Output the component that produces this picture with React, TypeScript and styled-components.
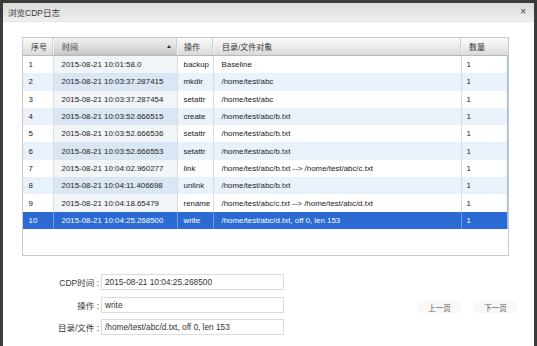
import styled, { createGlobalStyle } from 'styled-components';

const GlobalStyle = createGlobalStyle`
  html, body {
    margin: 0;
    padding: 0;
    width: 537px;
    height: 346px;
    overflow: hidden;
    background: #3b3b3b;
  }
  * {
    box-sizing: border-box;
  }
`;

const FONT = `'Liberation Sans', 'Noto Sans CJK SC', sans-serif`;

interface Column {
  title: string;
  width: string;
  pad: number;
  headPad: number;
}

const COLUMNS: Column[] = [
  { title: '序号', width: '31px', pad: 6, headPad: 8 },
  { title: '时间', width: '124px', pad: 8, headPad: 8 },
  { title: '操作', width: '36px', pad: 6, headPad: 6 },
  { title: '目录/文件对象', width: '248px', pad: 8, headPad: 8 },
  { title: '数量', width: '1fr', pad: 5, headPad: 7 },
];

const GRID_COLUMNS = COLUMNS.map((c) => c.width).join(' ');

const ROWS = [
  ['1', '2015-08-21 10:01:58.0', 'backup', 'Baseline', '1'],
  ['2', '2015-08-21 10:03:37.287415', 'mkdir', '/home/test/abc', '1'],
  ['3', '2015-08-21 10:03:37.287454', 'setattr', '/home/test/abc', '1'],
  ['4', '2015-08-21 10:03:52.666515', 'create', '/home/test/abc/b.txt', '1'],
  ['5', '2015-08-21 10:03:52.666536', 'setattr', '/home/test/abc/b.txt', '1'],
  ['6', '2015-08-21 10:03:52.666553', 'setattr', '/home/test/abc/b.txt', '1'],
  ['7', '2015-08-21 10:04:02.960277', 'link', '/home/test/abc/b.txt --> /home/test/abc/c.txt', '1'],
  ['8', '2015-08-21 10:04:11.406698', 'unlink', '/home/test/abc/b.txt', '1'],
  ['9', '2015-08-21 10:04:18.65479', 'rename', '/home/test/abc/c.txt --> /home/test/abc/d.txt', '1'],
  ['10', '2015-08-21 10:04:25.268500', 'write', '/home/test/abc/d.txt, off 0, len 153', '1'],
];

const SELECTED = 9;

const FIELDS = [
  { label: 'CDP时间 :', value: '2015-08-21 10:04:25.268500' },
  { label: '操作 :', value: 'write' },
  { label: '目录/文件 :', value: '/home/test/abc/d.txt, off 0, len 153' },
];

export default function App() {
  return (
    <>
      <GlobalStyle />
      <StyledFrame>
        <StyledDialog>
          <StyledTitleBar>
            <StyledTitle>浏览CDP日志</StyledTitle>
            <StyledClose>×</StyledClose>
          </StyledTitleBar>

          <StyledBody>
            <StyledGridBox>
              <StyledHeader>
                {COLUMNS.map((col, i) => (
                  <StyledHeadCell key={col.title} $pad={col.headPad} $sorted={i === 1}>
                    {col.title}
                    {i === 1 && <StyledSortArrow />}
                  </StyledHeadCell>
                ))}
              </StyledHeader>
              <StyledRows>
                {ROWS.map((row, r) => (
                  <StyledRow key={row[0]} $even={r % 2 === 1} $selected={r === SELECTED}>
                    {row.map((cell, c) => (
                      <StyledCell key={c} $pad={COLUMNS[c].pad} $sorted={c === 1}>
                        {cell}
                      </StyledCell>
                    ))}
                  </StyledRow>
                ))}
              </StyledRows>
            </StyledGridBox>

            <StyledFooter>
              <StyledFields>
                {FIELDS.map((f) => (
                  <StyledFieldRow key={f.label}>
                    <StyledLabel>{f.label}</StyledLabel>
                    <StyledInput>{f.value}</StyledInput>
                  </StyledFieldRow>
                ))}
              </StyledFields>
              <StyledPager>
                <StyledPageButton type="button">上一页</StyledPageButton>
                <StyledPageButton type="button">下一页</StyledPageButton>
              </StyledPager>
            </StyledFooter>
          </StyledBody>
        </StyledDialog>
      </StyledFrame>
    </>
  );
}

const StyledFrame = styled.div`
  display: flex;
  width: 537px;
  height: 346px;
  padding: 3px 3px 0 3px;

  background: #3b3b3b;
`;

const StyledDialog = styled.div`
  display: flex;
  flex-direction: column;
  flex: 1;

  background: #fff;
  font-family: ${FONT};
`;

const StyledTitleBar = styled.div`
  display: flex;
  align-items: center;
  justify-content: space-between;

  height: 19px;
  padding: 0 8px 0 5px;

  background: linear-gradient(#d9dcd9, #e4e7e4 60%, #eef0ee);
  border-bottom: 1px solid #e4e6e4;
`;

const StyledTitle = styled.span`
  color: #3a3a3a;
  font-size: 8.5px;
`;

const StyledClose = styled.span`
  color: #444;
  font-size: 10px;
  line-height: 1;
`;

const StyledBody = styled.div`
  display: flex;
  flex-direction: column;

  padding: 15px 25px 0 19px;
`;

const StyledGridBox = styled.div`
  display: flex;
  flex-direction: column;

  height: 219px;

  border: 1px solid #c9c9c9;
  background: #fff;
`;

const StyledHeader = styled.div`
  display: grid;
  grid-template-columns: ${GRID_COLUMNS};

  height: 18px;

  background: linear-gradient(#fafafa, #ececec 50%, #d9d9d9);
  border-bottom: 1px solid #b9b9b9;
`;

const StyledHeadCell = styled.div<{ $pad: number; $sorted: boolean }>`
  display: flex;
  align-items: center;
  justify-content: space-between;

  padding: 0 6px 0 ${({ $pad }) => $pad}px;

  color: #333;
  font-size: 8px;

  border-right: 1px solid #f4f4f4;
  box-shadow: inset -1px 0 0 #cfcfcf;
  background: ${({ $sorted }) => ($sorted ? 'linear-gradient(#f0f0f0, #dadada 60%, #c6c6c6)' : 'transparent')};

  &:last-child {
    border-right: none;
    box-shadow: none;
  }
`;

const StyledSortArrow = styled.span`
  width: 0;
  height: 0;

  border-left: 2.5px solid transparent;
  border-right: 2.5px solid transparent;
  border-bottom: 3px solid #333;
`;

const StyledRows = styled.div`
  display: flex;
  flex-direction: column;

  border-left: 1.5px solid #8fc2ec;
  border-right: 1.5px solid #8fc2ec;
`;

const StyledRow = styled.div<{ $even: boolean; $selected: boolean }>`
  display: grid;
  grid-template-columns: ${GRID_COLUMNS};

  height: 17.3px;
  margin-left: -1.5px;

  color: ${({ $selected }) => ($selected ? '#fff' : '#222')};
  background: ${({ $even, $selected }) => ($selected ? '#2a6ad2' : $even ? '#e9f2fb' : '#fff')};

  --sep: ${({ $selected }) => ($selected ? '#6e9be0' : '#d9dee4')};
  --sorted: ${({ $even, $selected }) =>
    $selected ? 'transparent' : $even ? 'rgba(150, 180, 210, 0.18)' : 'rgba(170, 190, 210, 0.16)'};
`;

const StyledCell = styled.div<{ $pad: number; $sorted: boolean }>`
  display: flex;
  align-items: center;

  padding-left: ${({ $pad }) => $pad}px;
  overflow: hidden;

  font-size: 7.9px;
  white-space: nowrap;

  border-right: 1px solid var(--sep);
  background: ${({ $sorted }) => ($sorted ? 'var(--sorted)' : 'transparent')};

  &:last-child {
    border-right: none;
  }
`;

const StyledFooter = styled.div`
  display: flex;
  align-items: center;
  justify-content: space-between;

  margin-top: 18px;
  margin-right: -8px;
`;

const StyledFields = styled.div`
  display: flex;
  flex-direction: column;
  gap: 6.5px;
`;

const StyledFieldRow = styled.div`
  display: flex;
  align-items: center;
`;

const StyledLabel = styled.span`
  width: 79px;
  padding-right: 2px;

  color: #333;
  font-size: 8.5px;
  text-align: right;
`;

const StyledInput = styled.div`
  display: flex;
  align-items: center;

  width: 183px;
  height: 16px;
  padding-left: 3px;

  color: #333;
  font-size: 8.3px;

  border: 1px solid #dcdcdc;
  background: #fff;
`;

const StyledPager = styled.div`
  display: flex;
  gap: 13px;

  margin-top: 5px;
`;

const StyledPageButton = styled.button`
  width: 43px;
  height: 12px;
  padding: 0;

  color: #555;
  font-family: ${FONT};
  font-size: 7.5px;

  border: none;
  background: #f8f8f8;
`;
